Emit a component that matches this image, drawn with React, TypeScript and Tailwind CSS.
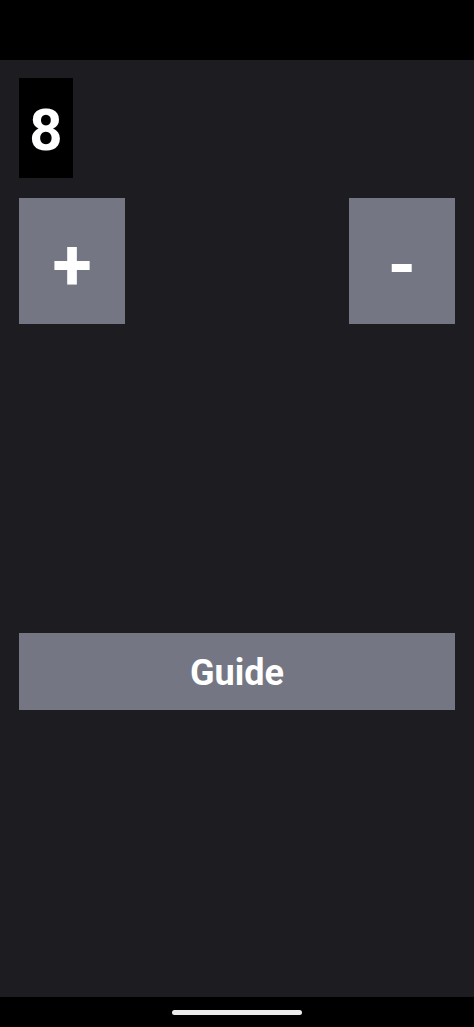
export default function App() {
  return (
    <div
      className="flex h-[1027px] w-full flex-col bg-[#1d1d21] text-white"
      style={{ fontFamily: "Roboto, 'Noto Sans', sans-serif" }}
    >
      {/* status bar */}
      <div className="h-[60px] shrink-0 bg-black" />

      <main className="flex flex-1 flex-col px-[19px] pt-[18px]">
        <div className="flex h-[100px] w-[54px] items-center justify-center bg-black pt-[4px] text-[58px] font-bold leading-none">
          8
        </div>

        <div className="mt-[20px] flex justify-between">
          <button className="flex h-[126px] w-[106px] items-center justify-center bg-[#747783] pt-[10px] text-[72px] font-bold leading-none">
            +
          </button>
          <button className="flex h-[126px] w-[106px] items-center justify-center bg-[#747783] pt-[10px] text-[72px] font-bold leading-none">
            -
          </button>
        </div>

        <button className="mt-[309px] flex h-[77px] w-full items-center justify-center bg-[#747783] pt-[2px] text-[36px] font-bold leading-none">
          Guide
        </button>
      </main>

      {/* navigation bar */}
      <div className="flex h-[30px] shrink-0 items-center justify-center bg-black">
        <div className="h-[5px] w-[130px] rounded-full bg-[#ececec]" />
      </div>
    </div>
  );
}
